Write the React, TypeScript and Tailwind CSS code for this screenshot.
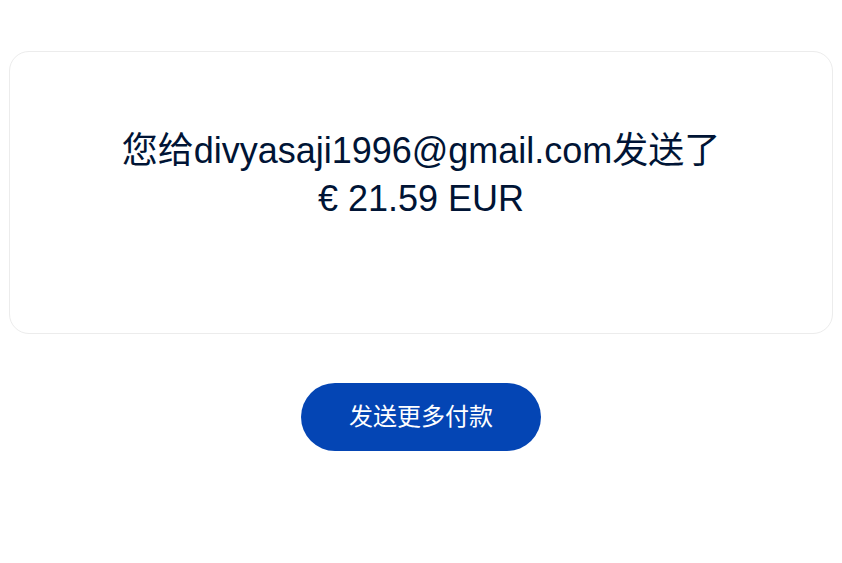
export default function App() {
  return (
    <div className="min-h-[563px] bg-white pt-[51px] px-[9px]" style={{ fontFamily: '"Liberation Sans", Arial, "Noto Sans CJK SC", sans-serif' }}>
      <div className="h-[283px] rounded-[20px] border border-[#ececec] pt-[75px] text-center text-[36px] leading-[48px] text-[#001435]">
        <p>您给divyasaji1996@gmail.com发送了</p>
        <p>€ 21.59 EUR</p>
      </div>
      <div className="mt-[49px] flex justify-center">
        <button className="h-[68px] w-[240px] rounded-full bg-[#0445b4] text-[24px] text-white">
          发送更多付款
        </button>
      </div>
    </div>
  );
}
